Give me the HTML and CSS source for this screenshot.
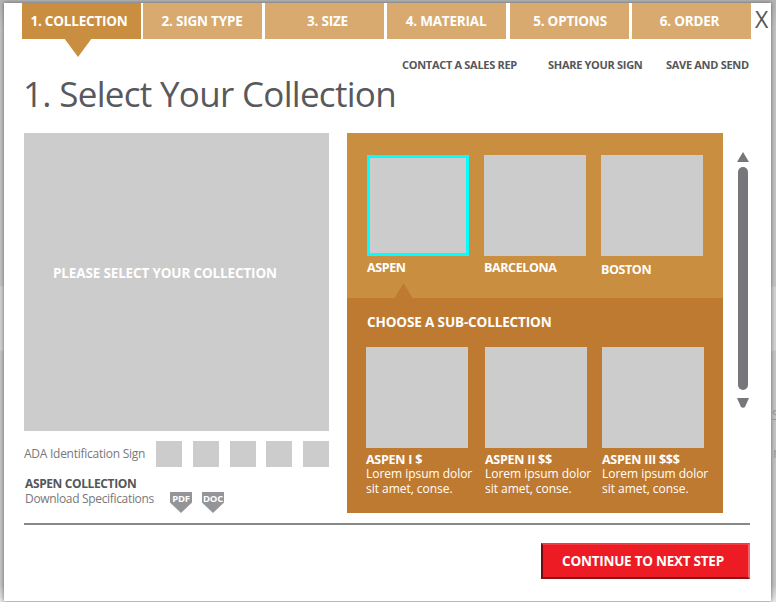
FILE: index.html
```html
<!DOCTYPE html>
<html lang="en">
<head>
<meta charset="utf-8">
<title>Select Your Collection</title>
<link rel="stylesheet" href="styles.css">
</head>
<body>
<div class="behind"><span class="behind-a">S</span><span class="behind-b">m</span></div>
<main class="modal">
  <nav class="tabs">
    <a class="tab active"><span>1. COLLECTION</span></a>
    <a class="tab"><span>2. SIGN TYPE</span></a>
    <a class="tab size"><span>3. SIZE</span></a>
    <a class="tab"><span>4. MATERIAL</span></a>
    <a class="tab options"><span>5. OPTIONS</span></a>
    <a class="tab order"><span>6. ORDER</span></a>
    <button class="close">X</button>
  </nav>
  <div class="links">
    <a class="contact">CONTACT A SALES REP</a>
    <a class="share">SHARE YOUR SIGN</a>
    <a class="save">SAVE AND SEND</a>
  </div>
  <h1>1. Select Your Collection</h1>
  <div class="content">
    <section class="left">
      <div class="preview"><span>PLEASE SELECT YOUR COLLECTION</span></div>
      <div class="ada">
        <span class="ada-label">ADA Identification Sign</span>
        <div class="swatches"><i></i><i></i><i></i><i></i><i></i></div>
      </div>
      <div class="specs">
        <div class="specs-text">
          <strong>ASPEN COLLECTION</strong>
          <span>Download Specifications</span>
        </div>
        <a class="badge">PDF</a>
        <a class="badge">DOC</a>
      </div>
    </section>
    <section class="panel">
      <div class="collections">
        <figure><div class="thumb selected"></div><figcaption class="c1">ASPEN</figcaption></figure>
        <figure><div class="thumb"></div><figcaption class="c2">BARCELONA</figcaption></figure>
        <figure><div class="thumb"></div><figcaption class="c3">BOSTON</figcaption></figure>
      </div>
      <div class="sub">
        <h2>CHOOSE A SUB-COLLECTION</h2>
        <div class="sub-items">
          <figure><div class="thumb"></div><strong>ASPEN I $</strong><p>Lorem ipsum dolor<br>sit amet, conse.</p></figure>
          <figure><div class="thumb"></div><strong>ASPEN II $$</strong><p>Lorem ipsum dolor<br>sit amet, conse.</p></figure>
          <figure><div class="thumb"></div><strong>ASPEN III $$$</strong><p>Lorem ipsum dolor<br>sit amet, conse.</p></figure>
        </div>
      </div>
    </section>
    <div class="scroll">
      <svg width="12" height="10" viewBox="0 0 12 10"><path d="M6 0 L12 10 H0 Z"/></svg>
      <div class="track"></div>
      <svg width="12" height="10" viewBox="0 0 12 10"><path d="M0 0 H12 L8 9 Q6 10.5 4 9 Z"/></svg>
    </div>
  </div>
  <footer><button class="next"><span>CONTINUE TO NEXT STEP</span></button></footer>
</main>
</body>
</html>
```

FILE: styles.css
```css
* { box-sizing: border-box; margin: 0; padding: 0; }
body {
  width: 776px; height: 602px; overflow: hidden; position: relative;
  padding: 3px 5px 1px 4px;
  background: linear-gradient(#b5b5b5 0 3px, #c3c3c3 30px 286px, #d2d2d2 287px 350px, #c4c4c4 351px 585px, #e6e6e6 600px);
  font-family: "Open Sans", "Noto Sans", sans-serif;
}
.behind { position: absolute; left: 772px; top: 0; width: 4px; height: 602px; overflow: hidden; color: #999; font-size: 14px; }
.behind-a, .behind-b { position: absolute; left: 0; top: 405px; }
.behind-b { left: 1px; top: 443px; }
.modal { position: relative; width: 767px; height: 598px; background: #fff; box-shadow: 0 0 4px rgba(0,0,0,.5); }
a, strong, span, h1, h2, figcaption, p, button { white-space: nowrap; }
.tabs { display: grid; grid-template-columns: 121px 122px 122px 123px 122px 119px auto; padding-left: 18px; height: 36px; }
.tab {
  position: relative; width: 119px; height: 36px; background: #d8aa6f; color: #fff; padding-right: 1px;
  font-size: 13.5px; font-weight: 700; line-height: 37px; text-align: center; letter-spacing: -.2px;
}
.tab.active { background: #ca8e40; padding-right: 5px; }
.tab.size { padding: 0 0 0 6px; }
.tab.options { padding-left: 2px; }
.tab.order { padding-right: 4px; }
.tab.active::after {
  content: ""; position: absolute; left: 42px; top: 35px; width: 28px; height: 19px;
  background: #ca8e40; clip-path: polygon(0 0, 100% 0, 50% 100%);
}
.close { border: 0; background: none; color: #55565a; font: 400 23px/32px "Open Sans"; width: 13px; height: 32px; margin-left: 4px; }
.links { display: flex; height: 30px; padding: 16px 0 0 398px; font-size: 11px; font-weight: 700; line-height: 20px; color: #55565a; letter-spacing: -.3px; }
.contact { width: 146px; }
.share { width: 118px; }
h1 { margin-left: 19px; height: 64px; font-size: 35px; font-weight: 400; line-height: 49px; color: #58595d; letter-spacing: -.7px; }
.content { display: flex; padding-left: 20px; height: 390px; }
.left { width: 305px; margin-right: 18px; }
.preview { height: 298px; padding-left: 29px; background: #ccc; color: #fff; font-size: 13.5px; font-weight: 700; line-height: 281px; letter-spacing: -.15px; }
.ada { display: flex; justify-content: space-between; height: 36px; margin-top: 10px; color: #77787b; font-size: 12px; line-height: 25px; letter-spacing: -.26px; }
.swatches { display: flex; justify-content: space-between; width: 173px; }
.swatches i { width: 26px; height: 26px; background: #ccc; }
.specs { display: flex; padding-left: 1px; }
.specs-text { display: flex; flex-direction: column; width: 145px; font-size: 12px; line-height: 14.5px; color: #77787b; letter-spacing: -.33px; }
.specs-text strong { color: #55565a; letter-spacing: -.38px; }
.badge {
  width: 22px; height: 21px; margin: 15px 10px 0 0; background: #949599; color: #fff; clip-path: polygon(0 0, 100% 0, 100% 50%, 50% 100%, 0 50%);
  font-size: 9.5px; font-weight: 700; line-height: 13px; text-align: center; letter-spacing: -.2px;
}
.panel { width: 376px; height: 380px; background: #ca8e40; color: #fff; }
.collections { display: flex; gap: 15px; height: 165px; padding: 22px 0 0 20px; }
.thumb { width: 102px; height: 101px; background: #ccc; }
.selected { border: 3px solid #0ff; }
figcaption { font-size: 12.5px; font-weight: 700; line-height: 24px; letter-spacing: -.4px; }
.c3 { padding-top: 2px; }
.sub { position: relative; height: 215px; background: #bf7a31; padding: 14px 0 0 19px; }
.sub::before {
  content: ""; position: absolute; left: 47px; top: -15px; width: 19px; height: 16px; background: #bf7a31;
  clip-path: polygon(50% 0, 100% 100%, 0 100%);
}
h2 { margin-left: 1px; height: 35px; font-size: 13.5px; font-weight: 700; line-height: 20px; letter-spacing: -.13px; }
.sub-items { display: grid; grid-template-columns: 119px 117px 102px; }
.sub-items strong { display: block; font-size: 12.5px; line-height: 19px; height: 19px; padding-top: 2px; font-weight: 700; letter-spacing: -.25px; }
.sub-items p { font-size: 12px; line-height: 14.5px; letter-spacing: -.03px; }
.scroll { display: flex; flex-direction: column; align-items: center; width: 12px; margin-left: 14px; padding-top: 19px; }
.scroll svg { display: block; flex: none; fill: #77777b; }
.track { width: 10px; height: 223px; margin: 5px 0 8px; border-radius: 5px; background: #77777b; }
footer { display: flex; justify-content: flex-end; width: 726px; margin-left: 20px; padding-top: 18px; border-top: 2px solid #87888a; }
.next {
  width: 209px; height: 36px; border: 2px solid; border-color: #f23a41 #f4656b #8a1219 #6d0d12; background: #ed1c24; color: #fff;
  padding-right: 5px; font: 700 13.5px/32px "Open Sans", sans-serif; letter-spacing: -.25px;
}
```
